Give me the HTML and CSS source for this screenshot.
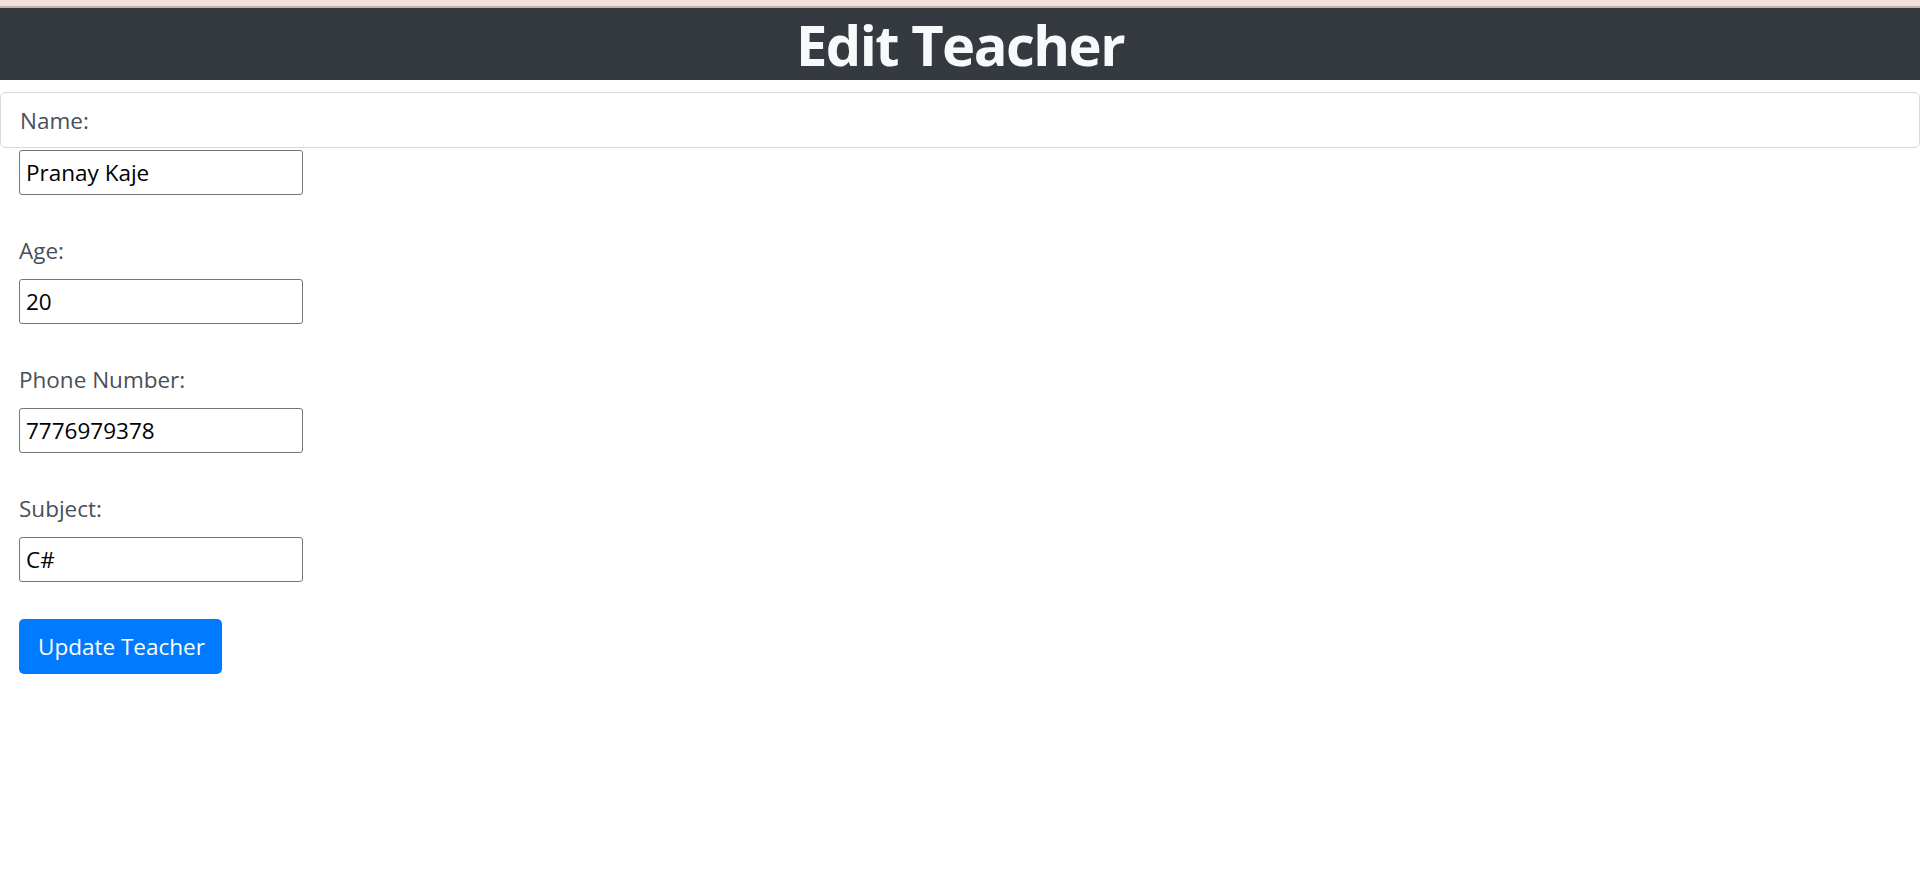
FILE: index.html
```html
<!DOCTYPE html>
<html lang="en">
<head>
<meta charset="utf-8">
<title>Edit Teacher</title>
<link rel="stylesheet" href="styles.css">
</head>
<body>
<div class="topstrip"></div>
<header class="page-header">
  <h1 class="title">Edit Teacher</h1>
</header>
<form class="teacher-form">
  <div class="card">
    <label class="label" for="name">Name:</label>
  </div>
  <div class="fields">
    <input class="input first" id="name" type="text" value="Pranay Kaje">
    <div class="group">
      <label class="label" for="age">Age:</label>
      <input class="input" id="age" type="text" value="20">
    </div>
    <div class="group">
      <label class="label" for="phone">Phone Number:</label>
      <input class="input" id="phone" type="text" value="7776979378">
    </div>
    <div class="group">
      <label class="label" for="subject">Subject:</label>
      <input class="input" id="subject" type="text" value="C#">
    </div>
    <button class="btn" type="button">Update Teacher</button>
  </div>
</form>
</body>
</html>
```
FILE: styles.css
```css
html, body {
  margin: 0;
  padding: 0;
  background: #ffffff;
}
body {
  font-family: "Open Sans", "Noto Sans", sans-serif;
  color: #495057;
}
.topstrip {
  height: 6px;
  background: #f5dfd8;
  border-bottom: 2px solid #c8b1ab;
}
.page-header {
  background: #343a40;
  height: 72px;
  display: flex;
  align-items: center;
  justify-content: center;
}
.title {
  margin: 0;
  font-size: 56px;
  font-weight: 700;
  letter-spacing: -1.5px;
  line-height: 72px;
  color: #f8f9fa;
}
.teacher-form {
  margin-top: 12px;
}
.card {
  box-sizing: border-box;
  height: 56px;
  border: 1px solid #d9d9d9;
  border-radius: 6px;
  padding: 0 19px;
  display: flex;
  align-items: center;
}
.label {
  display: block;
  font-size: 22.5px;
  line-height: 33px;
  color: #495057;
}
.fields {
  padding-left: 19px;
  display: flex;
  flex-direction: column;
  align-items: flex-start;
}
.input {
  box-sizing: border-box;
  width: 284px;
  height: 45px;
  margin: 0;
  border: 1px solid #767676;
  border-radius: 3px;
  padding: 0 6px;
  font-family: "Open Sans", "Noto Sans", sans-serif;
  font-size: 22.5px;
  color: #000000;
  background: #ffffff;
}
.input.first {
  margin-top: 2px;
}
.group {
  margin-top: 39px;
  display: flex;
  flex-direction: column;
  align-items: flex-start;
  gap: 12px;
}
.btn {
  margin-top: 37px;
  box-sizing: border-box;
  width: 203px;
  height: 55px;
  padding: 0 0 0 19px;
  border: none;
  border-radius: 5px;
  background: #007bff;
  color: #ffffff;
  font-family: "Open Sans", "Noto Sans", sans-serif;
  font-size: 22.5px;
  white-space: nowrap;
  text-align: left;
}
```
